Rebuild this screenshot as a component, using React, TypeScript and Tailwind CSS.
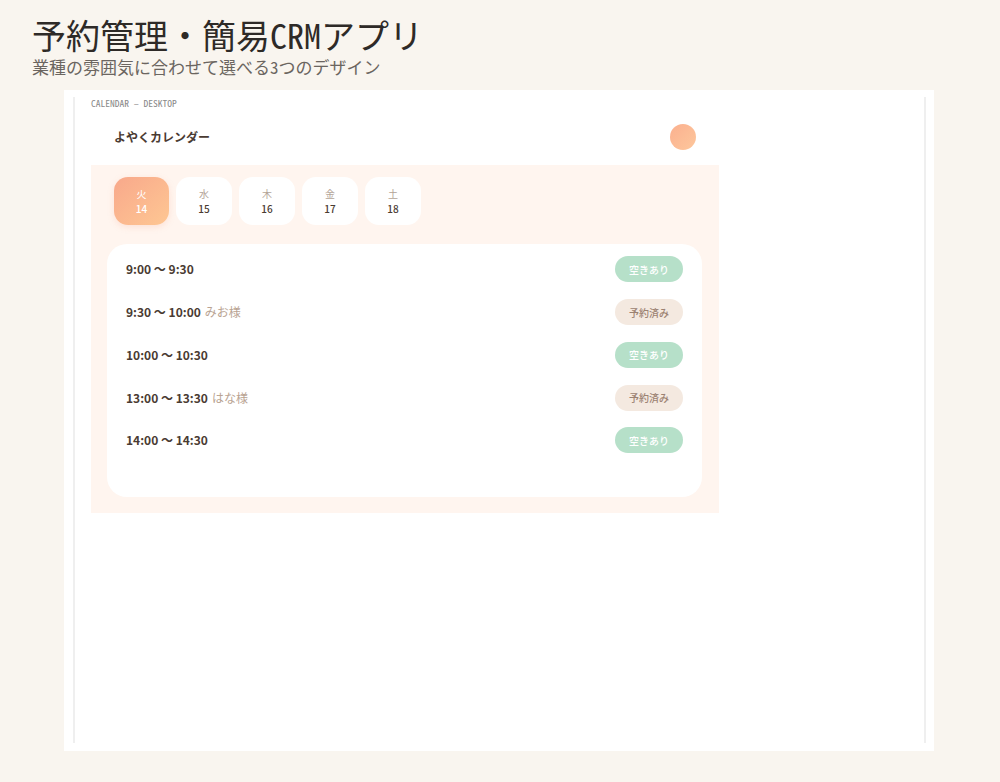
const days = [
  { d: "火", n: "14", active: true },
  { d: "水", n: "15" },
  { d: "木", n: "16" },
  { d: "金", n: "17" },
  { d: "土", n: "18" },
];

const slots = [
  { time: "9:00 〜 9:30", open: true },
  { time: "9:30 〜 10:00", name: "みお様", open: false },
  { time: "10:00 〜 10:30", open: true },
  { time: "13:00 〜 13:30", name: "はな様", open: false },
  { time: "14:00 〜 14:30", open: true },
];

const mono = "font-['Noto_Sans_Mono_CJK_JP','Noto_Sans_CJK_JP','DejaVu_Sans_Mono',monospace]";

export default function App() {
  return (
    <div className="min-h-screen bg-[#f9f5ef] pb-[31px]">
      <div className={`pl-[32px] pt-[14px] ${mono}`}>
        <h1 className="text-[34px] leading-[42px] text-[#2e2a27]">予約管理・簡易CRMアプリ</h1>
        <p className="text-[17px] leading-[22px] text-[#6b6560]">業種の雰囲気に合わせて選べる3つのデザイン</p>
      </div>

      <div className="ml-[64px] mt-[12px] h-[661px] w-[870px] bg-white px-[8px] pb-[8px] pt-[7px]">
        <div className="ml-[1px] h-full border-x-2 border-[#efefef] px-[16px]">
          <div className={`text-[9.5px] leading-[12px] text-[#8a8a8a] ${mono}`}>CALENDAR – DESKTOP</div>

          <div className="w-[628px] font-['Noto_Sans_CJK_JP','Lato',sans-serif]">
            <div className="flex h-[56px] items-center justify-between px-[23px]">
              <span className="text-[12px] font-bold text-[#4a3b32]">よやくカレンダー</span>
              <div className="h-[26px] w-[26px] rounded-full bg-gradient-to-br from-[#fbb08f] to-[#fdc79c]" />
            </div>

            <div className="bg-[#fff5ef] px-[16px] pb-[16px] pt-[12px]">
              <div className="flex gap-[7px] pl-[7px]">
                {days.map((day) =>
                  day.active ? (
                    <div
                      key={day.n}
                      className="flex h-[48px] w-[55px] flex-col items-center justify-center rounded-[14px] bg-gradient-to-br from-[#f8a88b] to-[#fec793] text-white shadow-[0_2px_6px_rgba(248,168,139,0.25)]"
                    >
                      <span className="text-[10px] leading-[14px]">{day.d}</span>
                      <span className="text-[10px] font-medium leading-[15px]">{day.n}</span>
                    </div>
                  ) : (
                    <div
                      key={day.n}
                      className="flex h-[48px] w-[56px] flex-col items-center justify-center rounded-[14px] bg-white"
                    >
                      <span className="text-[10px] leading-[14px] text-[#b3a497]">{day.d}</span>
                      <span className="text-[10px] font-medium leading-[15px] text-[#4a3b32]">{day.n}</span>
                    </div>
                  ),
                )}
              </div>

              <div className="mr-[1px] mt-[19px] h-[253px] rounded-[20px] bg-white px-[19px] pt-[4px]">
                {slots.map((s) => (
                  <div key={s.time} className="flex h-[42.75px] items-center justify-between">
                    <span className="text-[12px] font-bold text-[#4a3b32]">
                      {s.time}
                      {s.name && <span className="ml-[4px] font-normal text-[#b9a392]">{s.name}</span>}
                    </span>
                    {s.open ? (
                      <span className="flex h-[26px] w-[68px] items-center justify-center rounded-full bg-[#b6e0c9] text-[10px] font-medium text-white">
                        空きあり
                      </span>
                    ) : (
                      <span className="flex h-[26px] w-[68px] items-center justify-center rounded-full bg-[#f4e9e0] text-[10px] font-medium text-[#9c8272]">
                        予約済み
                      </span>
                    )}
                  </div>
                ))}
              </div>
            </div>
          </div>
        </div>
      </div>
    </div>
  );
}
